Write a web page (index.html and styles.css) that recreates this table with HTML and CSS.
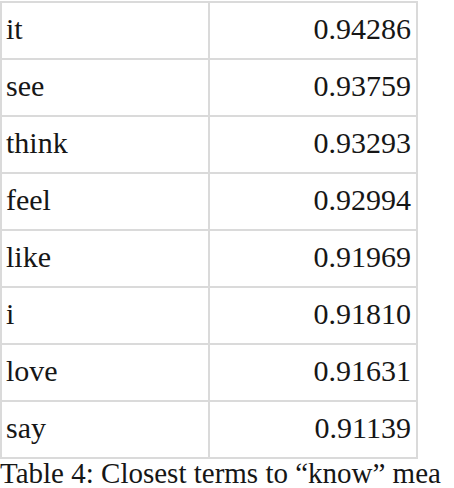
FILE: index.html
```html
<!DOCTYPE html>
<html>
<head>
<meta charset="utf-8">
<link rel="stylesheet" href="styles.css">
</head>
<body>
<div class="page">
<table class="terms">
<tr><td class="term">it</td><td class="score">0.94286</td></tr>
<tr><td class="term">see</td><td class="score">0.93759</td></tr>
<tr><td class="term">think</td><td class="score">0.93293</td></tr>
<tr><td class="term">feel</td><td class="score">0.92994</td></tr>
<tr><td class="term">like</td><td class="score">0.91969</td></tr>
<tr><td class="term">i</td><td class="score">0.91810</td></tr>
<tr><td class="term">love</td><td class="score">0.91631</td></tr>
<tr><td class="term">say</td><td class="score">0.91139</td></tr>
</table>
<p class="caption">Table 4: Closest terms to “know” mea</p>
</div>
</body>
</html>
```
FILE: styles.css
```css
html, body {
  margin: 0;
  padding: 0;
  background: #fff;
}
.page {
  width: 454px;
  height: 488px;
  overflow: hidden;
  font-family: "Liberation Serif", serif;
  color: #161616;
}
.terms {
  border-collapse: collapse;
  width: 418px;
  margin-top: 1px;
}
.terms td {
  border: 2px solid #dadada;
  height: 57px;
  padding: 0 5px 3px 4px;
  font-size: 30px;
  box-sizing: border-box;
  width: 50%;
}
.terms .score {
  text-align: right;
}
.caption {
  margin: 0;
  white-space: nowrap;
  font-size: 29px;
  line-height: 28px;
}
```
